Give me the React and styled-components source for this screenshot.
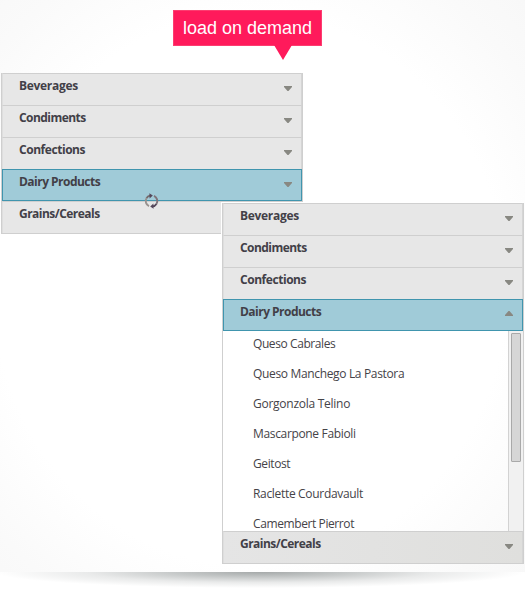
import React from "react";
import styled, { createGlobalStyle, css } from "styled-components";

const Global = createGlobalStyle`
  * { box-sizing: border-box; }
  body { margin: 0; background: #fff; font-family: "Open Sans", "Noto Sans", sans-serif; }
`;

const Page = styled.div`
  width: 525px;
  height: 590px;
  overflow: hidden;
  background: #fff;
`;

const Canvas = styled.main`
  height: 572px;
  overflow: hidden;
  display: flex;
  flex-direction: column;
  background: radial-gradient(ellipse 400px 430px at 250px 290px, #fff 64%, #fafafa 84%, #f3f3f3 125%);
`;

const Shadow = styled.div`
  height: 18px;
  background: radial-gradient(ellipse 265px 16px at 260px 0, #a5a9a9 0%, #c5c8c8 32%, #e9eaea 65%, #fff 100%);
`;

const Callout = styled.div`
  width: 149px;
  height: 50px;
  margin: 10px 0 0 173px;
`;

const CalloutLabel = styled.div`
  height: 36px;
  border: 1px solid #fc3d70;
  background: #ff1a5b;
  color: #fff;
  font: 18px/34px "Liberation Sans", Arial, sans-serif;
  text-align: center;
  white-space: nowrap;
`;

const Pointer = styled.div`
  width: 18px;
  height: 15px;
  margin: -1px 0 0 101px;
  background: #ff1a5b;
  clip-path: polygon(0 0, 100% 0, 50% 100%);
`;

const Stage = styled.div`
  display: grid;
  grid-template-columns: 525px;
  align-items: start;
`;

const Panel = styled.section`
  grid-area: 1 / 1;
  width: 302px;
  border: solid #cfcfcf;
  border-width: 0 1px 1px;
  margin: ${(p) => (p.$front ? "143px 0 0 222px" : "13px 0 0 1px")};
  box-shadow: ${(p) => (p.$front ? "-1px -1px 0 #fff" : "none")};
`;

const Header = styled.div`
  display: flex;
  justify-content: space-between;
  height: 32px;
  padding: 4px 9px 0 16px;
  border: 1px solid #cfcfcf;
  border-width: 1px 1px 0;
  border-left-color: #dedede;
  border-right-color: #d5d5d5;
  background: #e7e7e7;
  color: #424047;
  font-size: 12px;
  font-weight: 700;
  line-height: 16px;
  ${(p) => p.$last && css`
    background: ${p.$front ? "linear-gradient(90deg, #e5e5e5, #dfdfdd)" : "#e7e7e7"};
  `}
  ${(p) => p.$active && css`
    border: 1px solid #4095ae;
    background: #a0cbd8;
  `}
`;

const Label = styled.span`
  letter-spacing: ${(p) => p.$spacing}px;
`;

const Arrow = styled.svg`
  display: block;
  width: 8px;
  height: 5px;
  margin-top: ${(p) => (p.$up ? "7px" : "8px")};
  transform: ${(p) => (p.$up ? "rotate(180deg)" : "none")};
  fill: #888882;
`;

const ListArea = styled.div`
  display: flex;
  height: 200px;
  overflow: hidden;
`;

const List = styled.ul`
  flex: 1;
  margin: 0;
  padding: 0 0 0 30px;
  list-style: none;
`;

const Item = styled.li`
  height: 30px;
  padding-top: 5px;
  color: #454348;
  font-size: 12px;
  line-height: 16px;
  letter-spacing: ${(p) => p.$spacing}px;
  white-space: nowrap;
`;

const Track = styled.div`
  width: 15px;
  padding: 2px 2px 0;
  border-left: 1px solid #d2d2d2;
  background: #f1f1f1;
`;

const Thumb = styled.div`
  width: 10px;
  height: 129px;
  border: 1px solid #a9a9a9;
  border-radius: 1px;
  background: #d6d6d6;
`;

const Spinner = styled.svg`
  position: absolute;
  left: 144px;
  top: 193px;
  width: 15px;
  height: 16px;
`;

function Caret({ up }) {
  return (
    <Arrow $up={up} viewBox="0 0 8 5">
      <path d="M0 0H8V1L4.5 5H3.5L0 1Z" />
    </Arrow>
  );
}

function Row({ children, spacing, ...rest }) {
  return (
    <Header {...rest}>
      <Label $spacing={spacing}>{children}</Label>
      <Caret up={rest.$open} />
    </Header>
  );
}

const cheeses = [
  ["Queso Cabrales", -0.41],
  ["Queso Manchego La Pastora", -0.34],
  ["Gorgonzola Telino", -0.26],
  ["Mascarpone Fabioli", -0.34],
  ["Geitost", -0.4],
  ["Raclette Courdavault", -0.32],
  ["Camembert Pierrot", -0.4],
];

function Categories({ open }) {
  return (
    <Panel $front={open}>
      <Row spacing={-0.3}>Beverages</Row>
      <Row spacing={-0.56}>Condiments</Row>
      <Row spacing={-0.45}>Confections</Row>
      <Row spacing={-0.52} $active $open={open}>Dairy Products</Row>
      {open && (
        <ListArea>
          <List>
            {cheeses.map(([name, spacing]) => (
              <Item key={name} $spacing={spacing}>{name}</Item>
            ))}
          </List>
          <Track><Thumb /></Track>
        </ListArea>
      )}
      <Row spacing={-0.53} $last $front={open}>Grains/Cereals</Row>
    </Panel>
  );
}

export default function App() {
  return (
    <Page>
      <Global />
      <Canvas>
        <Callout>
          <CalloutLabel>load on demand</CalloutLabel>
          <Pointer />
        </Callout>
        <Stage>
          <Categories open={false} />
          <Categories open />
        </Stage>
      </Canvas>
      <Shadow />
      <Spinner viewBox="0 0 15 16" fill="none" strokeWidth="1.9">
        <path d="M5 13.2A5.7 5.7 0 0 1 2.6 5" stroke="#98928f" />
        <path d="M2.6 5Q4 2.8 6.5 2.6" stroke="#746a6c" />
        <path d="M10 2.8A5.7 5.7 0 0 1 12.4 11" stroke="#7f747b" />
        <path d="M12.4 11Q11 13.2 8.5 13.4" stroke="#54475a" />
        <path d="M5.4 0.2L8.8 2.6L5.6 5.4Z" fill="#54475a" />
        <path d="M9.6 15.8L6.2 13.4L9.4 10.6Z" fill="#54475a" />
      </Spinner>
    </Page>
  );
}
